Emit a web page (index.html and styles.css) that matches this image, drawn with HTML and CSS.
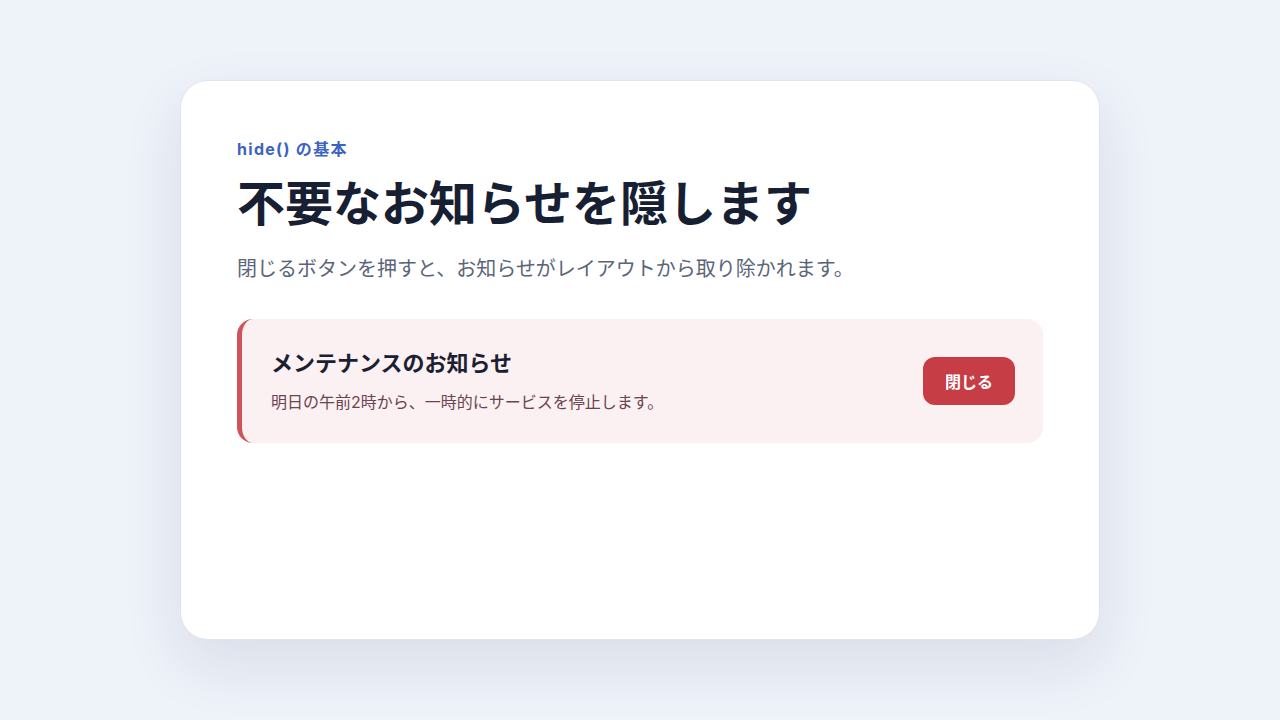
FILE: index.html
```html
<!DOCTYPE html>
<html lang="ja">
<head>
  <meta charset="UTF-8">
  <title>hide() の基本</title>
  <link rel="stylesheet" href="styles.css">
</head>
<body>
  <main class="card">
    <p class="eyebrow">hide() の基本</p>
    <h1>不要なお知らせを隠します</h1>
    <p class="lead">閉じるボタンを押すと、お知らせがレイアウトから取り除かれます。</p>

    <!-- notice -->
    <div class="notice" id="notice">
      <div class="notice-body">
        <h2>メンテナンスのお知らせ</h2>
        <p>明日の午前2時から、一時的にサービスを停止します。</p>
      </div>
      <button class="close-btn" onclick="document.getElementById('notice').style.display = 'none'">閉じる</button>
    </div>
  </main>
</body>
</html>
```

FILE: styles.css
```css
* {
  box-sizing: border-box;
}

body {
  margin: 0;
  height: 720px;
  font-family: Inter, "Noto Sans CJK JP", sans-serif;
  background: #eef2f9;
  display: flex;
  align-items: center;
  justify-content: center;
}

.card {
  width: 920px;
  height: 560px;
  background: #ffffff;
  border: 1px solid #dfe4ec;
  border-radius: 28px;
  padding: 56px;
  box-shadow: 0 24px 60px rgba(30, 50, 90, 0.10);
}

.eyebrow {
  margin: 0;
  font-size: 16px;
  line-height: 24px;
  font-weight: 700;
  letter-spacing: 1.3px;
  color: #3c63c0;
}

h1 {
  margin: 14px 0 0;
  font-size: 48px;
  line-height: 58px;
  font-weight: 700;
  color: #172033;
}

.lead {
  margin: 21px 0 0;
  font-size: 20px;
  line-height: 30px;
  color: #5b6579;
}

.notice {
  margin-top: 35px;
  display: flex;
  align-items: center;
  justify-content: space-between;
  padding: 29px 28px 29px 29px;
  background: #fbf0f2;
  border-left: 5px solid #d0525b;
  border-radius: 16px;
}

.notice h2 {
  margin: 0;
  font-size: 22px;
  line-height: 30px;
  font-weight: 700;
  color: #1c1f33;
}

.notice p {
  margin: 12px 0 0;
  font-size: 16px;
  line-height: 24px;
  color: #6a4450;
}

.close-btn {
  width: 92px;
  height: 48px;
  border: none;
  border-radius: 12px;
  background: #c63d45;
  color: #ffffff;
  font-family: inherit;
  font-size: 16px;
  font-weight: 700;
  cursor: pointer;
}
```
